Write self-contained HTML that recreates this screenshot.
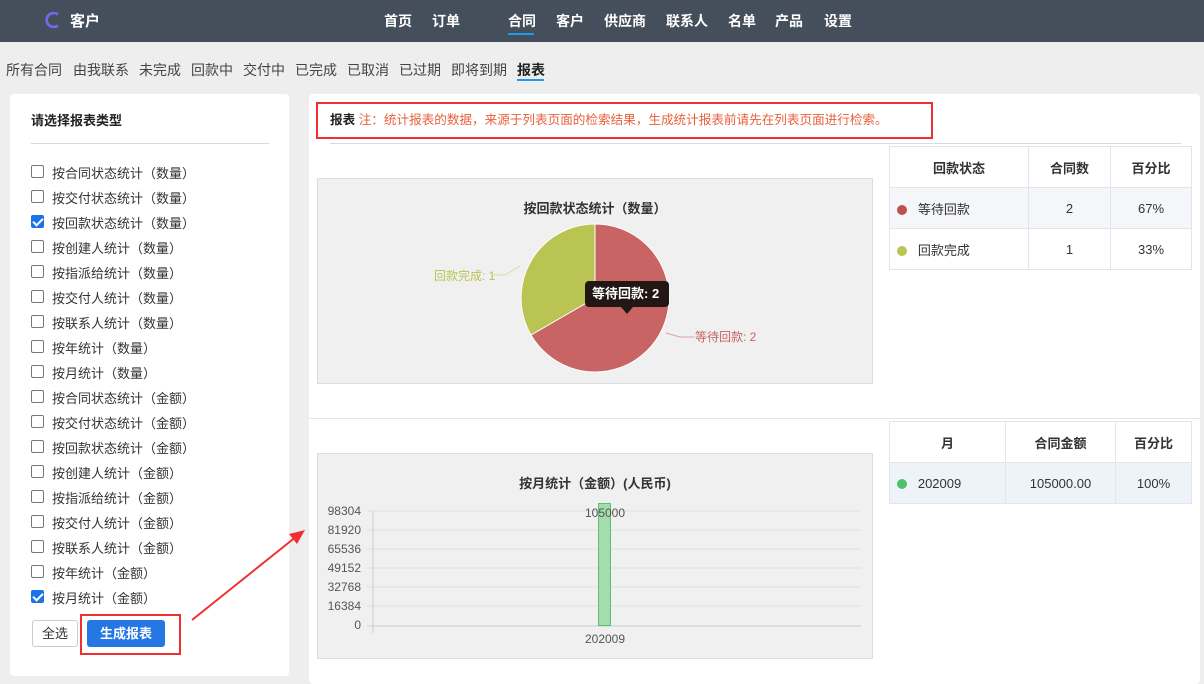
<!DOCTYPE html>
<html><head><meta charset="utf-8"><style>
*{margin:0;padding:0;box-sizing:border-box}
body{width:1204px;height:680px;overflow:hidden;background:#eeeeee;font-family:"Liberation Sans","Noto Sans CJK SC",sans-serif;position:relative;color:#333}
.abs{position:absolute}
.hdr{left:0;top:0;width:1204px;height:42px;background:#454f5b}
.nav span{position:absolute;top:11px;font-size:14px;color:#fff;font-weight:bold}
.sub span{position:absolute;top:60px;font-size:14px;color:#444}
.panel{background:#fff;border-radius:4px}
.cb{position:absolute;left:31px;width:13px;height:13px;border:1px solid #777;border-radius:2px;background:#fff}
.cb.on{background:#1a73e8;border-color:#1a73e8}
.cb.on:after{content:"";position:absolute;left:3px;top:0px;width:4px;height:8px;border:solid #fff;border-width:0 2px 2px 0;transform:rotate(45deg)}
.lab{position:absolute;left:52px;font-size:13px;color:#333}
table{border-collapse:collapse;position:absolute;font-size:13px}
td{border:1px solid #e3e5ec;text-align:center;height:41px;color:#333}
th{border:1px solid #e3e5ec;height:41px;font-weight:bold;color:#333}
.dot{display:inline-block;width:10px;height:10px;border-radius:5px;vertical-align:-1px}
</style></head><body>
<div class="abs hdr"></div>
<svg class="abs" style="left:44px;top:10px" width="18" height="20"><path d="M14 4.5A7 7 0 1 0 14 15.5" fill="none" stroke="#6b6cf0" stroke-width="2.6"/></svg>
<div class="abs" style="left:70px;top:10px;color:#fff;font-size:15px;font-weight:bold">客户</div>
<div class="nav">
<span style="left:384px">首页</span><span style="left:432px">订单</span><span style="left:508px">合同</span><span style="left:556px">客户</span><span style="left:604px">供应商</span><span style="left:666px">联系人</span><span style="left:728px">名单</span><span style="left:775px">产品</span><span style="left:824px">设置</span>
</div>
<div class="abs" style="left:508px;top:33px;width:26px;height:2px;background:#1e9bf0"></div>
<div class="sub">
<span style="left:6px">所有合同</span><span style="left:73px">由我联系</span><span style="left:139px">未完成</span><span style="left:191px">回款中</span><span style="left:243px">交付中</span><span style="left:295px">已完成</span><span style="left:347px">已取消</span><span style="left:399px">已过期</span><span style="left:451px">即将到期</span><span style="left:517px;font-weight:bold;color:#222">报表</span>
</div>
<div class="abs" style="left:517px;top:79px;width:27px;height:2px;background:#1e9bf0"></div>

<div class="abs panel" style="left:10px;top:94px;width:279px;height:582px"></div>
<div class="abs" style="left:31px;top:110px;font-size:13px;font-weight:bold;color:#222">请选择报表类型</div>
<div class="abs" style="left:31px;top:143px;width:238px;height:1px;background:#d8dae2"></div>
<div id="cbs"></div>
<div class="abs" style="left:32px;top:620px;width:46px;height:27px;border:1px solid #ccc;border-radius:3px;background:#fff;font-size:13px;text-align:center;line-height:25px">全选</div>
<div class="abs" style="left:87px;top:620px;width:78px;height:27px;border-radius:3px;background:#2577e3;color:#fff;font-size:13px;font-weight:bold;text-align:center;line-height:27px">生成报表</div>
<div class="abs" style="left:80px;top:614px;width:101px;height:41px;border:2px solid #f03030"></div>
<svg class="abs" style="left:185px;top:520px" width="130" height="110"><line x1="7" y1="100" x2="112" y2="16" stroke="#f03030" stroke-width="2"/><polygon points="120,10 104,14 112,24" fill="#f03030"/></svg>

<div class="abs panel" style="left:309px;top:94px;width:891px;height:590px"></div>
<div class="abs" style="left:316px;top:102px;width:617px;height:37px;border:2px solid #f03030"></div>
<div class="abs" style="left:330px;top:109px;font-size:12.6px;white-space:nowrap"><b style="color:#222">报表</b> <span style="color:#e8603c">注：统计报表的数据，来源于列表页面的检索结果，生成统计报表前请先在列表页面进行检索。</span></div>
<div class="abs" style="left:330px;top:143px;width:851px;height:1px;background:#d8dae2"></div>

<div class="abs" style="left:317px;top:178px;width:556px;height:206px;background:#f0f0f0;border:1px solid #ddd"></div>
<div class="abs" style="left:317px;top:198px;width:556px;text-align:center;font-size:13px;font-weight:bold;color:#333">按回款状态统计（数量）</div>
<svg class="abs" style="left:317px;top:178px" width="556" height="206">
<g transform="translate(-317,-178)">
<path d="M595 298 L595 224 A74 74 0 1 1 531 335 Z" fill="#c96464" stroke="#fff"/>
<path d="M595 298 L531 335 A74 74 0 0 1 595 224 Z" fill="#b9c452" stroke="#fff"/>
<polyline points="493,275 505,275 520,266" fill="none" stroke="#d6dba0"/>
<polyline points="666,333 680,337 694,337" fill="none" stroke="#e3a0a0"/>
<text x="434" y="280" font-size="12" fill="#b9c452">回款完成: 1</text>
<text x="695" y="341" font-size="12" fill="#c96464">等待回款: 2</text>
<rect x="585" y="281" width="84" height="26" rx="4" fill="#231715"/>
<polygon points="621,307 633,307 627,314" fill="#231715"/>
<text x="592" y="298" font-size="13" font-weight="bold" fill="#fff">等待回款: 2</text>
</g></svg>

<table style="left:889px;top:146px;width:303px">
<tr style="background:#fff"><th style="width:139px">回款状态</th><th style="width:82px">合同数</th><th>百分比</th></tr>
<tr style="background:#f5f6f9"><td style="text-align:left;padding-left:7px"><span class="dot" style="background:#c14f4f"></span>&nbsp;&nbsp;&nbsp;等待回款</td><td>2</td><td>67%</td></tr>
<tr style="background:#fff"><td style="text-align:left;padding-left:7px"><span class="dot" style="background:#b9c452"></span>&nbsp;&nbsp;&nbsp;回款完成</td><td>1</td><td>33%</td></tr>
</table>

<div class="abs" style="left:309px;top:418px;width:891px;height:1px;background:#e3e5ec"></div>

<div class="abs" style="left:317px;top:453px;width:556px;height:206px;background:#f0f0f0;border:1px solid #ddd"></div>
<div class="abs" style="left:317px;top:473px;width:556px;text-align:center;font-size:13px;font-weight:bold;color:#333">按月统计（金额）(人民币)</div>
<svg class="abs" style="left:317px;top:453px" width="556" height="206">
<g transform="translate(-317,-453)" font-size="12" fill="#555">
<g stroke="#e0e0e0">
<line x1="367" y1="511" x2="861" y2="511"/><line x1="367" y1="530" x2="861" y2="530"/><line x1="367" y1="549" x2="861" y2="549"/><line x1="367" y1="568" x2="861" y2="568"/><line x1="367" y1="587" x2="861" y2="587"/><line x1="367" y1="606" x2="861" y2="606"/></g>
<line x1="367" y1="626" x2="861" y2="626" stroke="#ccc"/>
<line x1="373" y1="511" x2="373" y2="633" stroke="#ccc"/>
<g text-anchor="end"><text x="361" y="515">98304</text><text x="361" y="534">81920</text><text x="361" y="553">65536</text><text x="361" y="572">49152</text><text x="361" y="591">32768</text><text x="361" y="610">16384</text><text x="361" y="629">0</text></g>
<rect x="598.5" y="503.5" width="12" height="122" fill="#a4dcae" stroke="#55c46a"/>
<text x="605" y="517" text-anchor="middle">105000</text>
<text x="605" y="643" text-anchor="middle">202009</text>
</g></svg>

<table style="left:889px;top:421px;width:303px">
<tr style="background:#fff"><th style="width:116px">月</th><th style="width:110px">合同金额</th><th>百分比</th></tr>
<tr style="background:#eef3fa"><td style="text-align:left;padding-left:7px"><span class="dot" style="background:#4fc16a"></span>&nbsp;&nbsp;&nbsp;202009</td><td>105000.00</td><td>100%</td></tr>
</table>

<script>
var L=["按合同状态统计（数量）","按交付状态统计（数量）","按回款状态统计（数量）","按创建人统计（数量）","按指派给统计（数量）","按交付人统计（数量）","按联系人统计（数量）","按年统计（数量）","按月统计（数量）","按合同状态统计（金额）","按交付状态统计（金额）","按回款状态统计（金额）","按创建人统计（金额）","按指派给统计（金额）","按交付人统计（金额）","按联系人统计（金额）","按年统计（金额）","按月统计（金额）"];
var h="";L.forEach(function(t,i){var y=172+i*25;var on=(i==2||i==17)?" on":"";h+='<div class="cb'+on+'" style="top:'+(y-7)+'px"></div><div class="lab" style="top:'+(y-9)+'px">'+t+'</div>';});
document.getElementById("cbs").innerHTML=h;
</script>
</body></html>
